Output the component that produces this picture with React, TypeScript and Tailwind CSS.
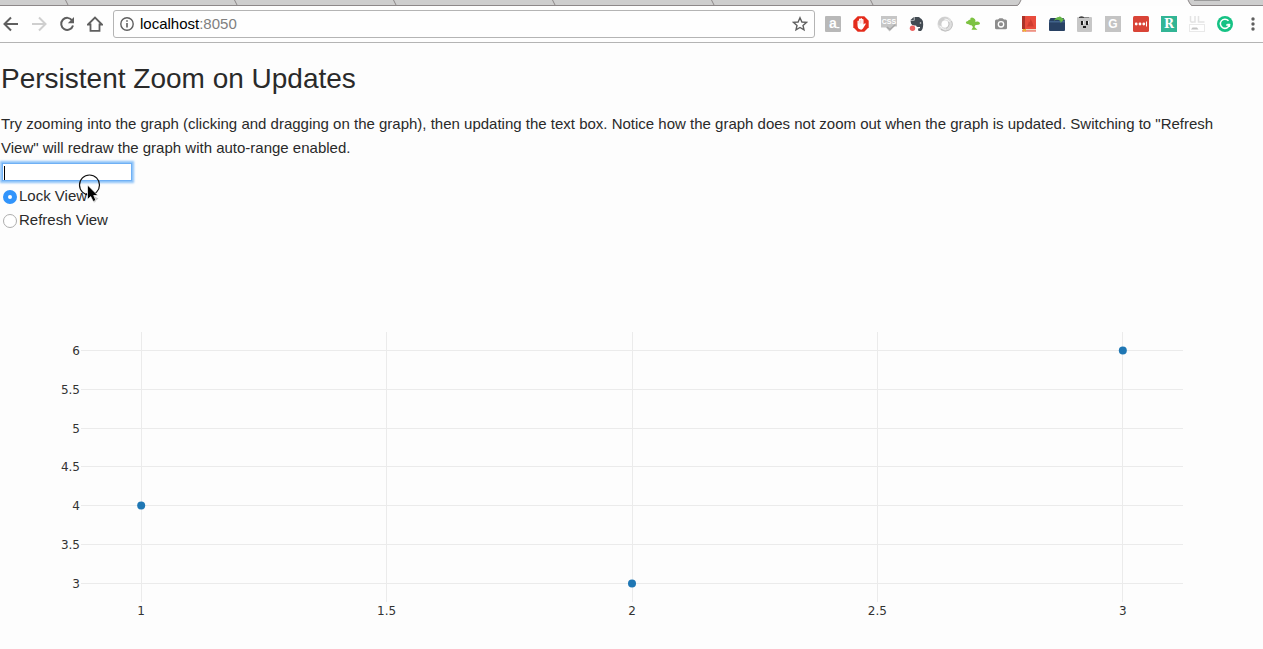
import { useState, type ReactNode } from "react";

const xTicks = [1, 1.5, 2, 2.5, 3];
const yTicks = [6, 5.5, 5, 4.5, 4, 3.5, 3];
const points = [
  { x: 1, y: 4 },
  { x: 2, y: 3 },
  { x: 3, y: 6 },
];

const xPos = (x: number) => `${50 + (x - 2) * 44.54}%`;
const yPos = (y: number) => Math.round(17.9 + ((6 - y) * 233) / 3) + 0.5;

function Graph() {
  return (
    <div className="pb-10 pl-[81px] pr-20 pt-[100px]">
      <svg
        className="block h-[270px] w-full overflow-visible font-['DejaVu_Sans',sans-serif] text-xs"
        role="img"
        aria-label="Scatter plot"
      >
        <g stroke="#ebebeb" strokeWidth="1" shapeRendering="crispEdges">
          {xTicks.map((x) => (
            <line key={x} x1={xPos(x)} x2={xPos(x)} y1="0" y2="270" />
          ))}
          {yTicks.map((y) => (
            <line key={y} x1="0" x2="100%" y1={yPos(y)} y2={yPos(y)} />
          ))}
        </g>
        <g fill="#333333">
          {xTicks.map((x) => (
            <text key={x} x={xPos(x)} y="283" textAnchor="middle">
              {x}
            </text>
          ))}
          {yTicks.map((y) => (
            <text key={y} x="-1" y={yPos(y) + 4.5} textAnchor="end">
              {y}
            </text>
          ))}
        </g>
        <g fill="#1f77b4">
          {points.map((p) => (
            <circle key={p.x} cx={xPos(p.x)} cy={yPos(p.y)} r="4" />
          ))}
        </g>
      </svg>
    </div>
  );
}

const separators = [68, 237, 396, 555, 714, 873];

function TabStrip() {
  return (
    <svg className="block h-1.5 w-full bg-[#cecece]" aria-hidden="true">
      <rect x="0" y="5" width="100%" height="1" fill="#8d8889" />
      {separators.map((x) => (
        <path key={x} d={`M${x - 2.5} 0L${x} 5`} stroke="#8d8889" fill="none" />
      ))}
      <path d="M1021 0L1019 4Q1018 6 1016 6H1192Q1190 5 1188 0Z" fill="#fdfdfd" />
      <path d="M1021 0L1019 4Q1018 5.5 1016 5.5M1188 0Q1190 5 1192 5.5" stroke="#8d8889" fill="none" />
      <rect x="1194" y="0" width="26" height="1" fill="#9b9b9b" />
    </svg>
  );
}

function ToolButton({ label, children }: { label: string; children: ReactNode }) {
  return (
    <button type="button" aria-label={label} className="size-4 shrink-0">
      <svg viewBox="0 0 16 16" className="block size-4">
        {children}
      </svg>
    </button>
  );
}

function NavButtons() {
  return (
    <div className="flex gap-3">
      <ToolButton label="Back">
        <path d="M15 8H2M8 1.5L1.5 8L8 14.5" fill="none" stroke="#5f5f5f" strokeWidth="2" />
      </ToolButton>
      <ToolButton label="Forward">
        <path d="M1 8H14M8 1.5L14.5 8L8 14.5" fill="none" stroke="#cfcfcf" strokeWidth="2" />
      </ToolButton>
      <ToolButton label="Reload">
        <path d="M13.2 4.5A6 6 0 1 0 14 9.5" fill="none" stroke="#5f5f5f" strokeWidth="2" />
        <path d="M15 1V7.2H8.8Z" fill="#5f5f5f" />
      </ToolButton>
      <ToolButton label="Home">
        <path d="M1 8.5L8 1.5L15 8.5H12.5V14.8H3.5V8.5Z" fill="none" stroke="#5f5f5f" strokeWidth="1.8" />
      </ToolButton>
    </div>
  );
}

function Extensions() {
  return (
    <div className="flex gap-3">
      <ToolButton label="Mail tracker">
        <rect width="16" height="16" rx="1" fill="#b8b8b8" />
        <text x="8" y="12" textAnchor="middle" fill="#fff" className="font-['Liberation_Sans',sans-serif] text-sm font-bold">
          a
        </text>
        <path d="M11.5 11.6H14.5" stroke="#fff" strokeWidth="1.2" />
      </ToolButton>
      <ToolButton label="Ad blocker">
        <path d="M4.7 .3H11.3L15.7 4.7V11.3L11.3 15.7H4.7L.3 11.3V4.7Z" fill="#e42c1c" />
        <path d="M4.5 9V5Q5.2 4 6 5V3Q6.7 2 7.5 3V2.4Q8.3 1.5 9 2.4V3.3Q10 2.5 10.5 3.5V8.5L12 7.3Q13 7.3 12.6 8.3L10 12.5Q9 14 7.5 13.5Q4.5 13 4.5 9Z" fill="#fff" />
        <path d="M6 4.5V7.5M7.5 4V7.5M9 4V7.5" stroke="#f2a7a0" strokeWidth=".5" />
      </ToolButton>
      <ToolButton label="CSS viewer">
        <path d="M0 0H16V10.5H13L8.5 15.5L5 11.5H0Z" fill="#c6c6c6" />
        <text x="8" y="8" textAnchor="middle" fill="#fff" className="font-['Liberation_Sans',sans-serif] text-[7px] font-bold">
          CSS
        </text>
        <path d="M6 11L9 13.5L14.5 8.5" fill="none" stroke="#a8a8a8" strokeWidth="1.5" />
      </ToolButton>
      <ToolButton label="Web clipper">
        <path d="M5.5 1H9.5Q10.5 1 11 2L12.5 3Q14.5 4.5 14.2 8.5Q14 13.5 12 15H9.5Q8.5 13.5 9.5 12.3H11V11H9Q7.5 11 7 9.5Q3 10 2 7.5L1.5 4.5H5.5Z" fill="#424a52" />
        <path d="M1.5 4L4.8 1V4Z" fill="#424a52" />
        <circle cx="11.5" cy="7" r=".8" fill="#ddd" />
        <circle cx="3.5" cy="12.3" r="2.7" fill="#ee6260" />
      </ToolButton>
      <ToolButton label="Sync">
        <circle cx="8" cy="8" r="5.6" fill="none" stroke="#dedede" strokeWidth="4" />
        <path d="M1.5 9Q0 4 5 1.5Q10 0 12 3.5Q8 2.5 5 5.5Q3.5 8 4.5 10Z" fill="#cdcdcd" />
        <path d="M14.5 5Q17 10 12.5 14Q8 16.5 4 13.5Q9 13.5 11 11Q13 8 11.5 5.5" fill="none" stroke="#bcbcbc" strokeWidth=".9" />
        <path d="M3.5 10Q5 14 9 13M12.5 6Q11 2.5 7.5 3" fill="none" stroke="#f8f8f8" />
      </ToolButton>
      <ToolButton label="Tree">
        <path d="M5.5 2Q7 .8 8.5 2L10 3.2Q11 4.8 10 5.8L13 5.5Q15.3 6 15 8Q13.5 9.3 10.5 9L9.5 11L12.5 13.8H6.5L8 11L6.5 9.3Q4.5 9.5 4 8.3Q1 8.5 .8 6.5Q1 5 3 5Q3.5 3.5 5.3 3.8Z" fill="#7dc242" />
      </ToolButton>
      <ToolButton label="Screenshot">
        <path d="M3.5 3.5H5L6.5 2.3H9.5L11 3.5H12.5Q14 3.5 14 5V12Q14 13.3 12.5 13.3H3.5Q2 13.3 2 12V5Q2 3.5 3.5 3.5Z" fill="#8d8d8d" />
        <circle cx="8" cy="8.3" r="2.7" fill="#8d8d8d" stroke="#fff" strokeWidth="1.3" />
      </ToolButton>
      <ToolButton label="Reference book">
        <path d="M1 0H15V15.5H1Z" fill="#e84c3d" />
        <path d="M1 0H4V13H1Z" fill="#aa3329" />
        <path d="M1 13H15V14.5H1Z" fill="#f1ddc8" />
        <path d="M2 13H5V16L3.5 14.8L2 16Z" fill="#edb42c" />
        <path d="M9.5 3L11 5.5L12.8 10.5H6L7.5 7L7.7 5.5L8.8 6Z" fill="#cf3c30" />
      </ToolButton>
      <ToolButton label="Wallet">
        <path d="M0 4.5L1.5 2H14.5L16 4.5V14Q16 15 15 15H1Q0 15 0 14Z" fill="#284163" />
        <path d="M0 5H16V6.5H0Z" fill="#40628a" />
        <path d="M5 4.5Q7 .5 10.5 1V0L15 3.5L11.5 7V5Q8.5 3 5 4.5Z" fill="#65b646" />
      </ToolButton>
      <ToolButton label="Mask">
        <rect y="1" width="15" height="15" rx="1" fill="#c7c7c7" />
        <path d="M2 1Q4.5 -.5 7 1V2H2Z" fill="#444" />
        <path d="M7 1H12V2H7Z" fill="#888" />
        <path d="M4 5H6V9H4ZM9 5H11V9H9ZM6 10H9V12H6Z" fill="#202020" />
        <path d="M6 5H7V8H6ZM11 5H12V8H11Z" fill="#f4f4f4" />
      </ToolButton>
      <ToolButton label="Page tools">
        <rect width="16" height="16" fill="#c4c4c4" />
        <text x="8" y="12" textAnchor="middle" fill="#fff" className="font-['Liberation_Sans',sans-serif] text-xs font-bold">
          G
        </text>
      </ToolButton>
      <ToolButton label="Password manager">
        <rect width="16" height="16" rx="1.5" fill="#d94437" />
        <circle cx="3.2" cy="8" r="1.4" fill="#fff" />
        <circle cx="7" cy="8" r="1.4" fill="#fff" />
        <circle cx="10.8" cy="8" r="1.4" fill="#fff" />
        <rect x="13" y="5.5" width="1" height="5" fill="#fff" />
      </ToolButton>
      <ToolButton label="Reader">
        <rect width="16" height="16" fill="#32b595" />
        <text x="8" y="12" textAnchor="middle" fill="#fff" className="font-['DejaVu_Serif',serif] text-xs font-bold">
          R
        </text>
      </ToolButton>
      <ToolButton label="Notes">
        <path d="M1.5 0V5Q2 6.5 4 6H6V0M9.5 0V6H15.5" fill="none" stroke="#e3e3e3" strokeWidth="1.5" />
        <rect x=".5" y="8.5" width="15" height="7" fill="#fff" stroke="#e9e9e9" />
        <path d="M2 13.5L3.5 11.5H8L9.5 13.5Z" fill="#c4c4c4" />
      </ToolButton>
      <ToolButton label="Grammar checker">
        <circle cx="8" cy="8" r="8" fill="#15c284" />
        <path d="M11.5 4.8A4.6 4.6 0 1 0 12.4 9H9.2" fill="none" stroke="#fff" strokeWidth="1.5" />
        <path d="M12.5 11V8.3H10.3" fill="none" stroke="#fff" strokeWidth="1.3" />
      </ToolButton>
      <ToolButton label="Menu">
        <circle cx="8" cy="3" r="1.7" fill="#5f5f5f" />
        <circle cx="8" cy="8" r="1.7" fill="#5f5f5f" />
        <circle cx="8" cy="13" r="1.7" fill="#5f5f5f" />
      </ToolButton>
    </div>
  );
}

function Toolbar() {
  return (
    <div className="flex h-[37px] items-center border-b border-[#b4b4b4] bg-[#fefefe] pl-[3px] pr-0.5">
      <NavButtons />
      <div className="mx-2.5 flex h-7 min-w-0 flex-1 items-center rounded-[3px] border border-[#b4b4b4] px-1.5">
        <svg viewBox="0 0 14 14" className="mr-1.5 size-3.5 shrink-0" aria-hidden="true">
          <circle cx="7" cy="7" r="6.2" fill="none" stroke="#5f5f5f" strokeWidth="1.4" />
          <path d="M6.2 6H7.8V10.5H6.2ZM6.2 3.2H7.8V4.8H6.2Z" fill="#5f5f5f" />
        </svg>
        <div className="min-w-0 flex-1 text-[15px] leading-5 text-black">
          localhost<span className="text-[#808080]">:8050</span>
        </div>
        <ToolButton label="Bookmark this page">
          <path d="M8 1.8L9.9 6L14.4 6.4L11 9.4L12 13.9L8 11.5L4 13.9L5 9.4L1.6 6.4L6.1 6Z" fill="none" stroke="#5f5f5f" strokeWidth="1.4" />
        </ToolButton>
      </div>
      <Extensions />
    </div>
  );
}

const radioClass =
  "m-0 mt-0.5 size-3.5 shrink-0 appearance-none rounded-full border border-[#adadad] bg-white checked:border-[5px] checked:border-[#3194fb]";

export default function App() {
  const [text, setText] = useState("");
  const [view, setView] = useState("lock");

  return (
    <div className="min-h-screen bg-[#fdfdfd] font-['Liberation_Sans',Arial,sans-serif] text-[#2a2a2a]">
      <header>
        <TabStrip />
        <Toolbar />
      </header>
      <main className="text-[15px] leading-6">
        <h1 className="px-px pt-4 text-[28px] leading-10">Persistent Zoom on Updates</h1>
        <p className="pl-px pr-6 pt-[13px]">
          Try zooming into the graph (clicking and dragging on the graph), then updating the text box. Notice how the
          graph does not zoom out when the graph is updated. Switching to "Refresh View" will redraw the graph with
          auto-range enabled.
        </p>
        <div className="relative flex h-6 items-center px-0.5">
          <input
            type="text"
            aria-label="Graph title"
            autoFocus
            value={text}
            onChange={(e) => setText(e.target.value)}
            className="h-[18px] w-[130px] border border-[#6fb0f5] bg-white px-px text-[13px] leading-4 text-black caret-transparent shadow-[0_0_2px_2px_#8cc2f8] outline-none"
          />
          {text === "" && <span className="absolute left-1 top-1.5 h-3.5 w-px bg-black" aria-hidden="true" />}
          <svg viewBox="0 0 24 32" className="absolute left-[78px] top-3.5 h-8 w-6" aria-hidden="true">
            <circle cx="11.5" cy="11" r="10" fill="none" stroke="#111" strokeWidth="1.2" />
            <path d="M16 22L20.5 24.5L18 26.5L17 28.5L15 28Z" fill="#c4c4c4" />
            <path d="M9.5 11V25.5L12.7 22.5L15.2 27.5L17.9 26.3L15.7 21.5H20Z" fill="#000" stroke="#fff" strokeWidth=".7" />
          </svg>
        </div>
        <fieldset>
          <label className="flex items-center gap-0.5 pl-[3px]">
            <input
              type="radio"
              name="view"
              checked={view === "lock"}
              onChange={() => setView("lock")}
              className={radioClass}
            />
            Lock View
          </label>
          <label className="flex items-center gap-0.5 pl-[3px]">
            <input
              type="radio"
              name="view"
              checked={view === "refresh"}
              onChange={() => setView("refresh")}
              className={radioClass}
            />
            Refresh View
          </label>
        </fieldset>
        <Graph />
      </main>
    </div>
  );
}
